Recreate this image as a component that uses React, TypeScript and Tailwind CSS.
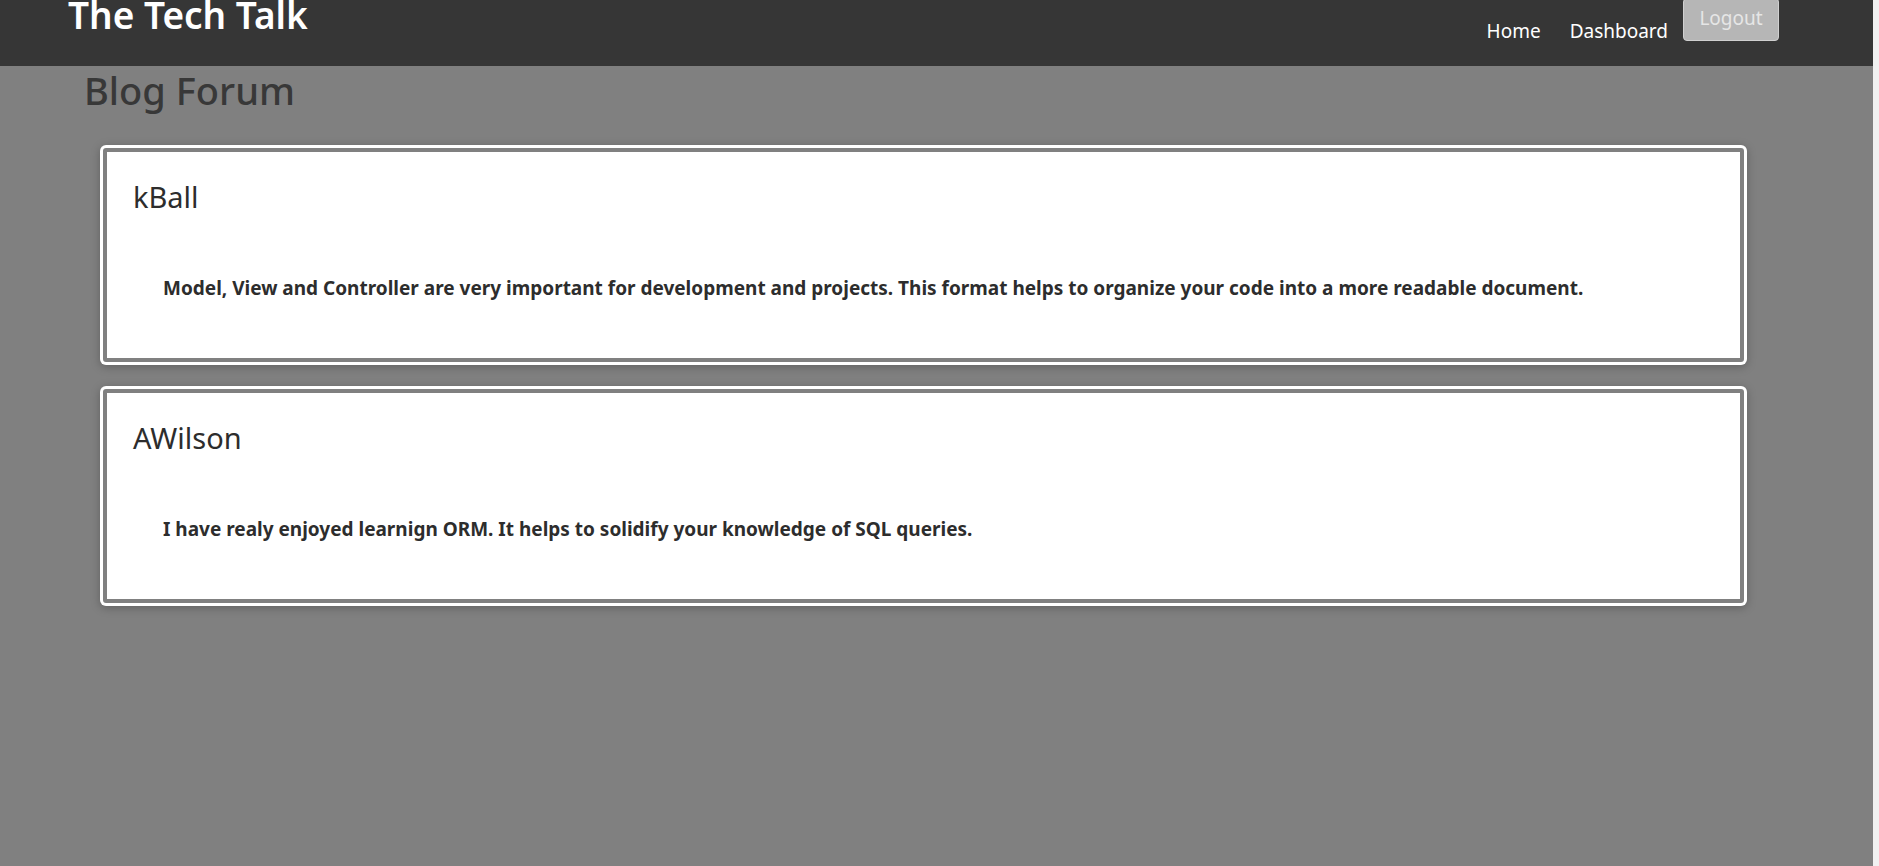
const posts = [
  {
    author: "kBall",
    body: "Model, View and Controller are very important for development and projects. This format helps to organize your code into a more readable document.",
  },
  {
    author: "AWilson",
    body: "I have realy enjoyed learnign ORM. It helps to solidify your knowledge of SQL queries.",
  },
];

function PostCard({ author, body }: { author: string; body: string }) {
  return (
    <div className="rounded-[6px] bg-white p-[3px] shadow-[0_2px_10px_rgba(0,0,0,0.25)]">
      <div className="h-[214px] rounded-[3px] border-[4px] border-[#808080] bg-white pl-[26px] pt-[25px]">
        <h3 className="text-[29px] leading-[40px] text-[#2d2d2d]">{author}</h3>
        <p className="mt-[57px] pl-[30px] text-[19px] font-bold leading-[28px] text-[#2d2d2d]">{body}</p>
      </div>
    </div>
  );
}

export default function App() {
  return (
    <div className="flex min-h-screen w-full bg-[#808080]" style={{ fontFamily: '"Noto Sans", "Open Sans", sans-serif' }}>
      <div className="flex-1">
        <header className="flex h-[66px] items-start justify-between bg-[#363636]">
          <h1 className="-mt-[5px] pl-[68px] text-[37px] font-semibold leading-[40px] text-white">The Tech Talk</h1>
          <nav className="mr-[94px] flex items-start">
            <a href="#" className="mt-[17px] text-[19px] leading-[28px] text-white">Home</a>
            <a href="#" className="ml-[29px] mt-[17px] text-[19px] leading-[28px] text-white">Dashboard</a>
            <button className="ml-[15px] -mt-[2px] h-[43px] w-[96px] rounded-[4px] border border-[#d0d0d0] bg-[#b6b6b6] pb-[3px] text-[19px] text-[#e6e6e6]">
              Logout
            </button>
          </nav>
        </header>
        <main>
          <h2 className="ml-[84px] -mt-[1px] text-[38px] font-medium leading-[50px] text-[#383838]">Blog Forum</h2>
          <div className="ml-[100px] mt-[30px] flex w-[1647px] flex-col gap-[21px]">
            {posts.map((p) => (
              <PostCard key={p.author} author={p.author} body={p.body} />
            ))}
          </div>
        </main>
      </div>
      <div className="w-[6px] bg-[#f1f1f1]" />
    </div>
  );
}
